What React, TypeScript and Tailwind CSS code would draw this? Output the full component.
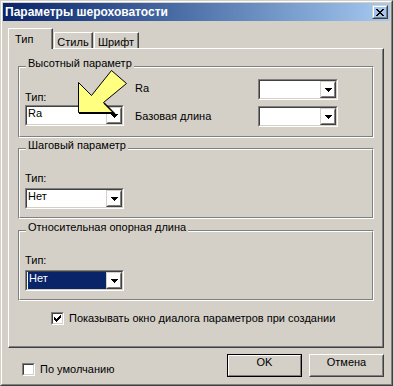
const XMARK = ["XX....XX", ".XX..XX.", "..XXXX..", "...XX...", "..XXXX..", ".XX..XX.", "XX....XX"];

function Pixels({ map }: { map: string[] }) {
  return (
    <svg width={map[0].length} height={map.length} shapeRendering="crispEdges">
      {map.flatMap((row, y) =>
        row.split("").map((c, x) => (c === "X" ? <rect key={`${x}-${y}`} x={x} y={y} width="1" height="1" fill="#000" /> : null))
      )}
    </svg>
  );
}

function Raised({ className, children }: { className: string; children?: React.ReactNode }) {
  return (
    <div className={`${className} flex border border-t-[#d4d0c8] border-l-[#d4d0c8] border-b-[#404040] border-r-[#404040]`}>
      <div className="flex flex-1 items-center justify-center border border-t-white border-l-white border-b-[#808080] border-r-[#808080]">
        {children}
      </div>
    </div>
  );
}

function Combo({ w, value, selected }: { w: string; value?: string; selected?: boolean }) {
  return (
    <div className={`${w} flex h-[21px] shrink-0 border border-t-[#808080] border-l-[#808080] border-b-white border-r-white`}>
      <div className="flex flex-1 border border-t-[#404040] border-l-[#404040] border-b-[#d4d0c8] border-r-[#d4d0c8] bg-white">
        {selected ? (
          <div className="ml-[1px] flex-1 bg-[#0a246a] pl-[1px] leading-[12px] text-white">{value}</div>
        ) : (
          <div className="flex-1 pl-[1px] leading-[12px]">{value}</div>
        )}
        <Raised className="h-full w-[16px]">
          <svg width="7" height="4" shapeRendering="crispEdges">
            <path d="M0 0H7V1H6V2H5V3H4V4H3V3H2V2H1V1H0Z" fill="#000" />
          </svg>
        </Raised>
      </div>
    </div>
  );
}

function Check({ checked }: { checked?: boolean }) {
  return (
    <div className="h-[13px] w-[13px] shrink-0 border border-t-[#808080] border-l-[#808080] border-b-white border-r-white">
      <div className="flex h-full w-full items-center justify-center border border-t-[#404040] border-l-[#404040] border-b-[#d4d0c8] border-r-[#d4d0c8] bg-white">
        {checked && (
          <svg width="7" height="7" shapeRendering="crispEdges">
            <path d="M0 2H1V3H2V4H3V3H4V2H5V1H6V0H7V3H6V4H5V5H4V6H3V7H2V6H1V5H0Z" fill="#000" />
          </svg>
        )}
      </div>
    </div>
  );
}

function Group({ title, className, children }: { title: string; className: string; children: React.ReactNode }) {
  return (
    <div className={`relative ml-[9px] w-[356px] border border-t-[#808080] border-l-[#808080] border-b-white border-r-white ${className}`}>
      <div className="h-full border border-t-white border-l-white border-b-[#808080] border-r-[#808080]">{children}</div>
      <div className="absolute left-[7px] top-[-10px] bg-[#d4d0c8] px-[2px]">{title}</div>
    </div>
  );
}

function Tab({ label, active, w }: { label: string; active?: boolean; w: string }) {
  if (active) {
    return (
      <div className={`relative z-10 -mb-[1px] flex h-[21px] ${w} border-t border-l border-r border-t-white border-l-white border-r-[#404040] bg-[#d4d0c8]`}>
        <div className="flex-1 border-r border-r-[#808080] pl-[6px] pt-[4px]">{label}</div>
      </div>
    );
  }
  return (
    <div className={`ml-[1px] flex h-[16px] ${w} border-t border-l border-r border-t-white border-l-white border-r-[#404040]`}>
      <div className="flex-1 border-r border-r-[#808080] pt-[3px] text-center">{label}</div>
    </div>
  );
}

export default function App() {
  return (
    <div className="relative h-[386px] w-[394px] overflow-hidden bg-[#d4d0c8] font-['Liberation_Sans',Arial,sans-serif] text-[11px] leading-[13px] text-black">
      <div className="h-[386px] w-[393px] border border-t-[#d4d0c8] border-l-[#d4d0c8] border-b-[#404040] border-r-[#404040]">
        <div className="flex h-full flex-col border border-t-white border-l-white border-b-[#808080] border-r-[#808080] p-[1px]">
          {/* title bar */}
          <div className="flex h-[18px] shrink-0 items-center bg-linear-to-r from-[#0a246a] to-[#a6caf0]">
            <div className="flex-1 pl-[2px] pt-[1px] text-[12px] font-bold text-white">Параметры шероховатости</div>
            <Raised className="mr-[2px] h-[14px] w-[16px]">
              <Pixels map={XMARK} />
            </Raised>
          </div>

          <div className="flex flex-1 flex-col pl-[5px] pr-[6px]">
            <div className="mt-[7px] flex h-[20px] items-end">
              <Tab label="Тип" active w="w-[45px]" />
              <Tab label="Стиль" w="w-[39px]" />
              <Tab label="Шрифт" w="w-[45px]" />
            </div>

            <div className="h-[300px] border border-t-white border-l-white border-b-[#404040] border-r-[#404040]">
              <div className="flex h-full flex-col border-b border-r border-b-[#808080] border-r-[#808080]">
                <Group title="Высотный параметр" className="mt-[17px] h-[72px]">
                  <div className="flex pl-[5px]">
                    <div className="flex w-[99px] flex-col">
                      <div className="mt-[23px]">Тип:</div>
                      <div className="mt-[1px]">
                        <Combo w="w-[99px]" value="Ra" />
                      </div>
                    </div>
                    <div className="ml-[11px] flex w-[123px] flex-col">
                      <div className="mt-[14px]">Ra</div>
                      <div className="mt-[15px]">Базовая длина</div>
                    </div>
                    <div className="flex w-[80px] flex-col">
                      <div className="mt-[11px]">
                        <Combo w="w-[80px]" />
                      </div>
                      <div className="mt-[6px]">
                        <Combo w="w-[80px]" />
                      </div>
                    </div>
                  </div>
                </Group>

                <Group title="Шаговый параметр" className="mt-[10px] h-[71px]">
                  <div className="flex flex-col pl-[5px]">
                    <div className="mt-[22px]">Тип:</div>
                    <div className="mt-[3px]">
                      <Combo w="w-[99px]" value="Нет" />
                    </div>
                  </div>
                </Group>

                <Group title="Относительная опорная длина" className="mt-[11px] h-[71px]">
                  <div className="flex flex-col pl-[5px]">
                    <div className="mt-[22px]">Тип:</div>
                    <div className="mt-[3px]">
                      <Combo w="w-[99px]" value="Нет" selected />
                    </div>
                  </div>
                </Group>

                <div className="ml-[42px] mt-[11px] flex items-center gap-[5px]">
                  <Check checked />
                  <span>Показывать окно диалога параметров при создании</span>
                </div>
              </div>
            </div>

            <div className="mt-[6px] flex h-[23px] items-start">
              <div className="ml-[14px] mt-[9px] flex items-center gap-[5px]">
                <Check />
                <span>По умолчанию</span>
              </div>
              <div className="ml-auto flex gap-[7px]">
                <div className="flex h-[23px] w-[75px] border border-black">
                  <div className="flex flex-1 justify-center border border-t-white border-l-white border-b-[#808080] border-r-[#808080]">
                    OK
                  </div>
                </div>
                <div className="flex h-[23px] w-[75px] border border-t-white border-l-white border-b-[#404040] border-r-[#404040]">
                  <div className="flex flex-1 justify-center border border-t-[#d4d0c8] border-l-[#d4d0c8] border-b-[#808080] border-r-[#808080]">
                    Отмена
                  </div>
                </div>
              </div>
            </div>
          </div>
        </div>
      </div>

      {/* yellow pointer arrow drawn over the dialog */}
      <svg className="pointer-events-none absolute left-0 top-0" width="394" height="386">
        <polygon
          points="111.5,70.5 126.5,83.5 103.5,102.5 113.5,112.5 78.5,112.5 78.5,82.5 91.5,95.5"
          fill="#ffff80"
          stroke="#000"
          strokeWidth="1"
          strokeLinejoin="miter"
        />
        <polyline points="79,113.5 114,113.5" stroke="#000" strokeWidth="1" fill="none" />
        <polyline points="104,103 115,114" stroke="#000" strokeWidth="1.5" fill="none" />
      </svg>
    </div>
  );
}
